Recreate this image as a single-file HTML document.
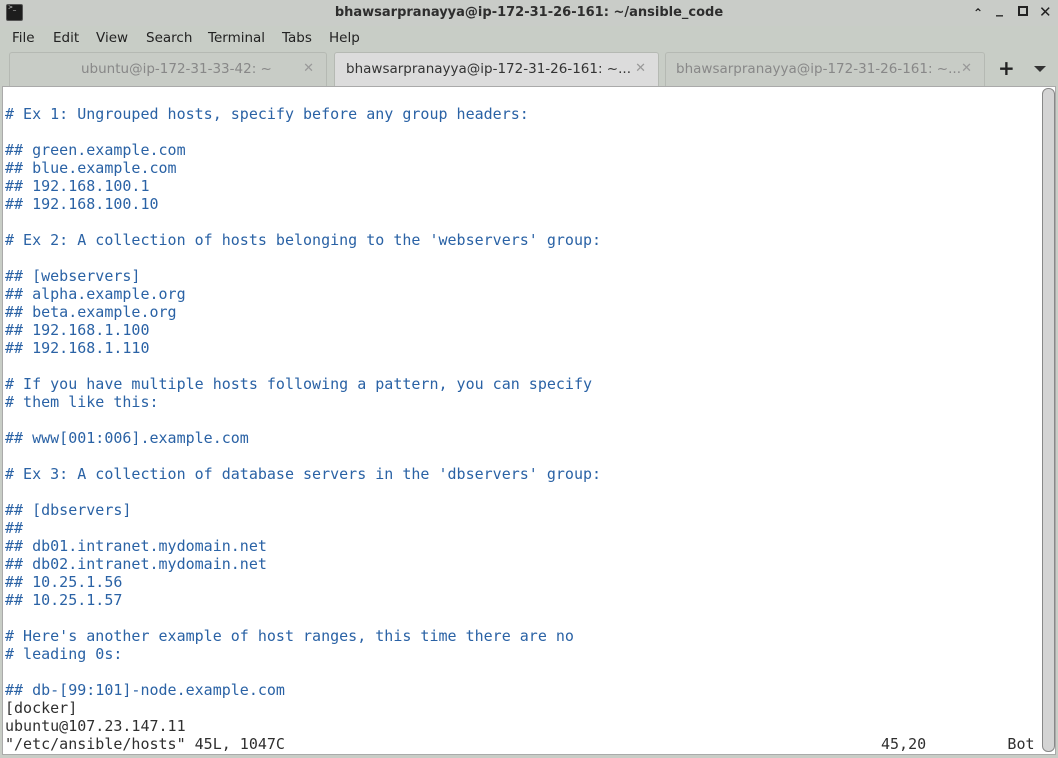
<!DOCTYPE html>
<html><head><meta charset="utf-8"><style>
*{margin:0;padding:0;box-sizing:border-box}
body{width:1058px;height:758px;overflow:hidden;background:#c8cdc6;font-family:"DejaVu Sans","Liberation Sans",sans-serif;position:relative}
.title{position:absolute;left:0;top:0;width:1058px;height:26px;background:#c9ccc8;}
.title .t{position:absolute;left:0;width:1058px;text-align:center;top:5px;font-size:13px;font-weight:bold;color:#2e2e2e}
.icon{position:absolute;left:6px;top:4px;width:17px;height:17px;background:#1d1d1d;border-radius:2px;border:1px solid #555}
.icon:after{content:">_";position:absolute;left:1px;top:-1px;font-size:6px;color:#ddd}
.wb{position:absolute;top:3px;font-size:14px;color:#222;font-weight:bold}
.menu{position:absolute;top:30px;left:0;font-size:13.5px;color:#222}
.menu span{position:absolute;white-space:nowrap}
.tab{position:absolute;top:52px;height:34px;border:1px solid #b5b9b3;border-bottom:none;border-radius:3px 3px 0 0;background:#c8ccc6;font-size:13.5px;color:#888;line-height:32px}
.tab.a{background:#dcdcdc;color:#333;height:35px}
.tab .x{position:absolute;right:12px;top:0;color:#999;font-size:13px}
.term{position:absolute;left:2px;top:86px;width:1054px;height:669px;background:#fff;border:1px solid #aaa}
pre{position:absolute;left:5px;top:87px;font-family:"DejaVu Sans Mono","Liberation Mono",monospace;font-size:15px;line-height:18px;color:#2f2f2f}
.b{color:#2a62a5}
.sb{position:absolute;left:1042px;top:88px;width:13px;height:664px;border:1px solid #888;border-radius:6px;background:#d4d4d4}
</style></head><body>
<div class="title"><div class="icon"></div><div class="t">bhawsarpranayya@ip-172-31-26-161: ~/ansible_code</div>
<span class="wb" style="left:973px;top:6px;font-size:12px">&#8963;</span>
<span class="wb" style="left:996px;top:1px">_</span>
<span class="wb" style="left:1018px;top:6px;width:10px;height:10px;border:2px solid #222"></span>
<span class="wb" style="left:1039px;top:3px;font-size:15px">✕</span></div>
<div class="menu"><span style="left:12px">File</span><span style="left:53px">Edit</span><span style="left:96px">View</span><span style="left:146px">Search</span><span style="left:208px">Terminal</span><span style="left:282px">Tabs</span><span style="left:329px">Help</span></div>
<div class="tab" style="left:9px;width:318px"><span style="position:absolute;left:71px">ubuntu@ip-172-31-33-42: ~</span><span class="x">✕</span></div>
<div class="tab a" style="left:334px;width:325px"><span style="position:absolute;left:11px">bhawsarpranayya@ip-172-31-26-161: ~...</span><span class="x">✕</span></div>
<div class="tab" style="left:665px;width:320px"><span style="position:absolute;left:10px">bhawsarpranayya@ip-172-31-26-161: ~...</span><span class="x">✕</span></div>
<span style="position:absolute;left:998px;top:56px;font-size:20px;color:#222;font-weight:bold">+</span>
<span style="position:absolute;left:1034px;top:66px;width:0;height:0;border-left:6px solid transparent;border-right:6px solid transparent;border-top:6px solid #333"></span>
<div class="term"></div>
<div class="sb"></div>
<pre>

<span class="b"># Ex 1: Ungrouped hosts, specify before any group headers:

## green.example.com
## blue.example.com
## 192.168.100.1
## 192.168.100.10

# Ex 2: A collection of hosts belonging to the 'webservers' group:

## [webservers]
## alpha.example.org
## beta.example.org
## 192.168.1.100
## 192.168.1.110

# If you have multiple hosts following a pattern, you can specify
# them like this:

## www[001:006].example.com

# Ex 3: A collection of database servers in the 'dbservers' group:

## [dbservers]
##
## db01.intranet.mydomain.net
## db02.intranet.mydomain.net
## 10.25.1.56
## 10.25.1.57

# Here's another example of host ranges, this time there are no
# leading 0s:

## db-[99:101]-node.example.com</span>
[docker]
ubuntu@107.23.147.11
"/etc/ansible/hosts" 45L, 1047C                                                                  45,20         Bot</pre>
</body></html>
